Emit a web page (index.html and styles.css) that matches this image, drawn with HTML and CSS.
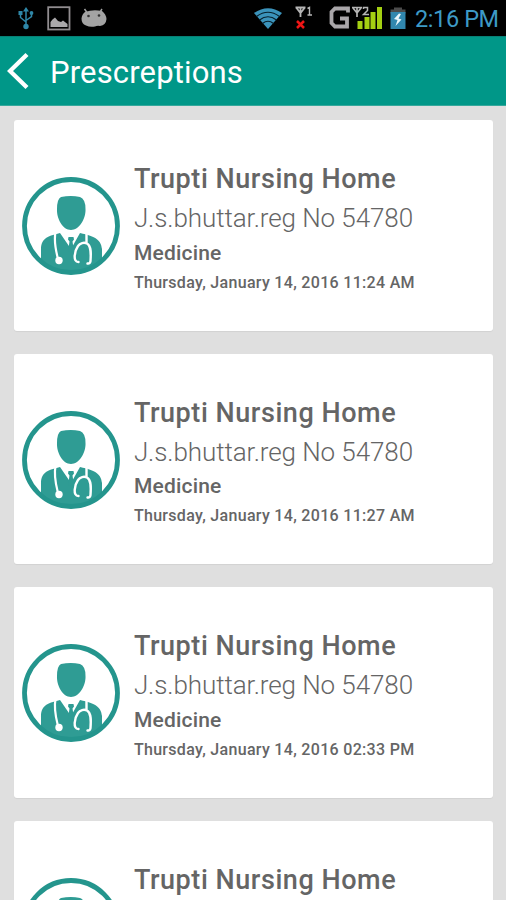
FILE: index.html
```html
<!DOCTYPE html>
<html lang="en">
<head>
  <meta charset="UTF-8" />
  <meta name="viewport" content="width=device-width, initial-scale=1.0" />
  <title>Prescreptions</title>
  <link rel="stylesheet" href="styles.css">
</head>
<body>
  <!-- shared doctor avatar -->
  <svg class="defs" width="0" height="0">
    <symbol id="doctor" viewBox="0 0 98 98">
      <circle cx="49" cy="49" r="46.5" fill="#fff" />
      <path fill="#2f9c94" d="M39 20 Q49 18 58 20 Q63.5 22 63.5 32 C64 42 57 53 49 53 C41 53 34.500 42 35 32 Q35 22 39 20 Z" />
      <path fill="#2f9c94" d="M19 84 V73 C19 62 24 59.500 38 56 L49 72 L58 56 C74 59.500 79 63 80 72 V84 Q66 97 49 97 Q32 97 19 84 Z" />
      <path fill="#2f9c94" d="M46.500 60 h5 l0.500 2.500 -1.500 2 1.500 10 h-6 l1.500 -10 -1.500 -2 Z" />
      <path fill="none" stroke="#fff" stroke-width="2.200" d="M33.500 55 C31.500 65 34 74 36 82" />
      <circle cx="37" cy="83.500" r="3.700" fill="#fff" />
      <path fill="none" stroke="#fff" stroke-width="2.400" stroke-linecap="round" d="M64.500 55 V66 M56.500 85 C50.500 85 52.500 74 56 69 C58 66 62 65 65 66.500 C69.500 69 69 77 68.500 84 Q68 87 65.500 86.500" />
      <circle cx="49" cy="49" r="46.500" fill="none" stroke="#24958d" stroke-width="4.800" />
    </symbol>
  </svg>

  <div class="status-bar">
    <div class="status-left">
      <svg width="16" height="24" viewBox="0 -1 16 24" fill="none" stroke="#2f87a8" stroke-width="1.500">
        <path d="M8 3 V20 M2.500 6 V10.500 L8 15 M13.500 6 V9.500 L8 13.500" />
        <path fill="#2f87a8" stroke="none" d="M8 0 L11 4.500 H5 Z M0.500 4 h4 v4 h-4 Z" />
        <circle cx="13.500" cy="6" r="1.900" fill="#2f87a8" stroke="none" />
        <circle cx="8" cy="19.500" r="2.700" fill="#2f87a8" stroke="none" />
      </svg>
      <svg class="picture" width="24" height="25" viewBox="0 0 24 25">
        <rect x="1.200" y="1.200" width="21.300" height="22.300" fill="none" stroke="#918d90" stroke-width="1.800" />
        <path fill="#aaa8aa" d="M3.500 21 V16 L5.500 13.500 L8 11.500 L11 15 L14 16 L16 14.500 L20.500 18 V21 Z" />
      </svg>
      <svg class="droid" width="26" height="20" viewBox="0 0 26 20">
        <path stroke="#a3a3a3" stroke-width="1.500" d="M6 4.500 L3.500 1 M19 4 L21 1" />
        <path fill="#a3a3a3" d="M4 4 Q12 1 21 3 Q25 6 25.500 11 Q25 17 19 18 Q16 17.500 14 18.500 Q9 19.500 5 17.500 Q0.500 16 0.500 10.500 Q1 6 4 4 Z" />
        <circle cx="7.500" cy="8" r="1.300" fill="#333" />
        <circle cx="18" cy="7.500" r="1.300" fill="#333" />
      </svg>
    </div>
    <div class="status-right">
      <svg width="28" height="21" viewBox="0 0 28 21">
        <path fill="#3b93bb" d="M0 5 Q14 -4.500 28 5 L14 21 Z" />
        <path fill="none" stroke="#07202c" stroke-width="1.200" d="M2.500 8.500 Q14 0 25.500 8.500 M5.500 12 Q14 5.500 22.500 12 M8.500 15.500 Q14 11 19.500 15.500" />
      </svg>
      <svg class="sim" width="18" height="24" viewBox="0 0 18 24" fill="none">
        <path stroke="#b5b5b5" stroke-width="1.800" d="M0.500 1.500 H10.500 M5.500 1 V11 M1.500 2 L5.500 7 L9.500 2" />
        <path stroke="#b5b5b5" stroke-width="1.400" d="M12.500 2.500 L14.500 1.500 V9 M12.500 9 H17" />
        <path stroke="#ee1515" stroke-width="2.500" d="M2 15 L9 22 M9 15 L2 22" />
      </svg>
      <svg class="signal" width="54" height="24" viewBox="0 0 54 24" fill="none">
        <path stroke="#a9a6a9" stroke-width="3.800" d="M19 6.500 V2.500 H6 L2.500 6 V17 L6 20.500 H18 V12.500 H11" />
        <path fill="#a4d012" d="M28.500 15 h5 v8 h-5 Z M35.500 11 h5 v12 h-5 Z M41.500 6 h5 v17 h-5 Z M48 1 h5 v22 h-5 Z" />
        <path stroke="#b5b5b5" stroke-width="1.700" d="M23 1.500 H33 M28 1 V11 M24 2 L28 7 L32 2" />
        <path stroke="#b5b5b5" stroke-width="1.500" d="M34.500 3 V1.500 H38.500 V4.500 L34.500 8.500 H40" />
      </svg>
      <svg class="battery" width="16" height="23" viewBox="0 0 16 23">
        <path fill="#4c4c4c" d="M4 0.500 h8 v2 h3.500 v4 H0.500 v-4 H4 Z" />
        <path fill="#3187ae" d="M0.500 5 h15 v17 h-15 Z" />
        <path fill="#e8f5fa" d="M9 6.500 L4 12 L7.500 13 L5.500 19 L11.500 12.500 L8.500 11.500 L11 7 Z" />
      </svg>
      <span class="clock">2:16 PM</span>
    </div>
  </div>

  <div class="app-bar">
    <svg width="22" height="38" viewBox="0 0 22 38">
      <path fill="none" stroke="#fff" stroke-width="4.300" d="M20 2.500 L3 19 L20 35.500" />
    </svg>
    <h1>Prescreptions</h1>
  </div>

  <div class="list">
    <div class="card">
      <svg class="avatar"><use href="#doctor" /></svg>
      <div class="info">
        <div class="name">Trupti Nursing Home</div>
        <div class="doctor">J.s.bhuttar.reg No 54780</div>
        <div class="type">Medicine</div>
        <div class="date">Thursday, January 14, 2016 11:24 AM</div>
      </div>
    </div>
    <div class="card">
      <svg class="avatar"><use href="#doctor" /></svg>
      <div class="info">
        <div class="name">Trupti Nursing Home</div>
        <div class="doctor">J.s.bhuttar.reg No 54780</div>
        <div class="type">Medicine</div>
        <div class="date">Thursday, January 14, 2016 11:27 AM</div>
      </div>
    </div>
    <div class="card">
      <svg class="avatar"><use href="#doctor" /></svg>
      <div class="info">
        <div class="name">Trupti Nursing Home</div>
        <div class="doctor">J.s.bhuttar.reg No 54780</div>
        <div class="type">Medicine</div>
        <div class="date">Thursday, January 14, 2016 02:33 PM</div>
      </div>
    </div>
    <div class="card">
      <svg class="avatar"><use href="#doctor" /></svg>
      <div class="info">
        <div class="name">Trupti Nursing Home</div>
      </div>
    </div>
  </div>
</body>
</html>
```

FILE: styles.css
```css
body {
  margin: 0;
  height: 900px;
  overflow: hidden;
  display: flex;
  flex-direction: column;
  font-family: Roboto, sans-serif;
  background-color: #dfdfdf;
}
svg {
  display: block;
  flex-shrink: 0;
}
.defs {
  position: absolute;
}
.status-bar {
  flex: none;
  display: flex;
  justify-content: space-between;
  height: 36px;
  padding: 0 8px 0 18px;
  box-sizing: border-box;
  background-color: #000;
}
.status-left, .status-right {
  display: flex;
  align-items: center;
}
.picture {
  margin-left: 13px;
}
.droid {
  margin-left: 10px;
}
.sim {
  margin-left: 13px;
}
.signal {
  margin-left: 16px;
}
.battery {
  margin-left: 7px;
}
.clock {
  width: 83px;
  margin-left: 9px;
  font-size: 23.5px;
  letter-spacing: -0.4px;
  line-height: 36px;
  padding-top: 2px;
  white-space: nowrap;
  color: #3d9ac6;
}
.app-bar {
  flex: none;
  display: flex;
  align-items: center;
  height: 70px;
  padding-left: 7px;
  box-sizing: border-box;
  border-top: 1px solid #087f75;
  border-bottom: 1px solid #35a89c;
  background-color: #009788;
}
.app-bar h1 {
  margin: 4px 0 0 21px;
  font-size: 31px;
  font-weight: 400;
  letter-spacing: 0.15px;
  line-height: 40px;
  color: #fff;
}
.list {
  flex: 1;
  min-height: 0;
  overflow: hidden;
  display: flex;
  flex-direction: column;
  gap: 23px;
  padding: 14.4px 13.5px 0 14.4px;
}
.card {
  flex: none;
  display: flex;
  height: 210.5px;
  padding-left: 7.5px;
  box-sizing: border-box;
  border-radius: 3px;
  background-color: #fff;
  box-shadow: 0 1px 1px rgba(0, 0, 0, 0.06);
}
.avatar {
  width: 98px;
  height: 98px;
  margin-top: 56.8px;
}
.info {
  margin-left: 14px;
  padding-top: 39px;
  color: #656565;
  white-space: nowrap;
}
.name {
  font-size: 27px;
  font-weight: 500;
  letter-spacing: 0.55px;
  line-height: 40px;
}
.doctor {
  font-size: 26px;
  font-weight: 300;
  letter-spacing: -0.09px;
  line-height: 38.5px;
}
.type {
  font-size: 21px;
  font-weight: 500;
  letter-spacing: 0.2px;
  line-height: 31px;
}
.date {
  font-size: 16px;
  font-weight: 500;
  letter-spacing: 0.31px;
  line-height: 27px;
}
```
